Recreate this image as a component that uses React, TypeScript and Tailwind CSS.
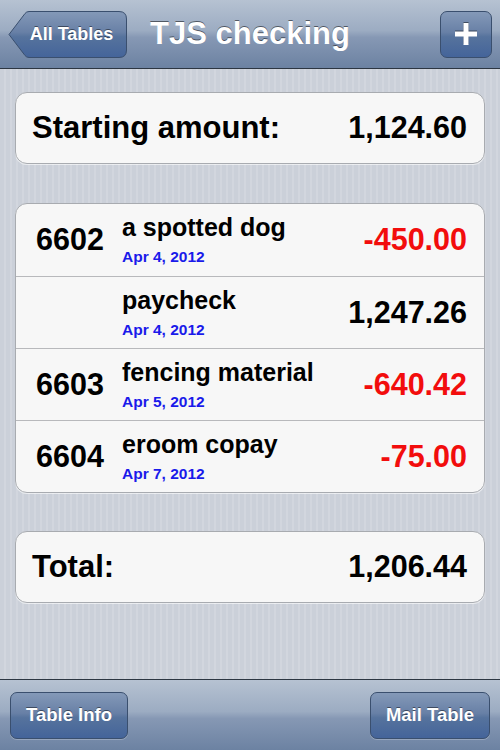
import React from "react";

const rows = [
  { num: "6602", desc: "a spotted dog", date: "Apr 4, 2012", amount: "-450.00", neg: true },
  { num: "", desc: "paycheck", date: "Apr 4, 2012", amount: "1,247.26", neg: false },
  { num: "6603", desc: "fencing material", date: "Apr 5, 2012", amount: "-640.42", neg: true },
  { num: "6604", desc: "eroom copay", date: "Apr 7, 2012", amount: "-75.00", neg: true },
];

const barBg = "bg-[linear-gradient(180deg,#b6c2d2_0%,#9cacc2_45%,#8698b4_55%,#6c82a2_100%)]";
const btnBg = "bg-[linear-gradient(180deg,#8499b8_0%,#6880a6_45%,#56739d_55%,#44649a_100%)]";

function BackButton() {
  return (
    <div className="relative h-[47px] w-[119px]">
      <svg width="119" height="47" viewBox="0 0 119 47" className="absolute inset-0">
        <defs>
          <linearGradient id="bk" x1="0" y1="0" x2="0" y2="1">
            <stop offset="0" stopColor="#8499b8" />
            <stop offset="0.45" stopColor="#6880a6" />
            <stop offset="0.55" stopColor="#56739d" />
            <stop offset="1" stopColor="#44649a" />
          </linearGradient>
        </defs>
        <path
          d="M1 23.5 L17 2.5 Q18.5 0.5 21 0.5 L111 0.5 Q118.5 0.5 118.5 8 L118.5 39 Q118.5 46.5 111 46.5 L21 46.5 Q18.5 46.5 17 44.5 Z"
          fill="url(#bk)"
          stroke="#3a4f6e"
          strokeWidth="1"
        />
      </svg>
      <span className="absolute inset-0 flex items-center justify-center pl-[8px] text-[18px] font-bold text-white [text-shadow:0_-1px_0_rgba(0,0,0,0.45)]">
        All Tables
      </span>
    </div>
  );
}

function BarButton({ children }: { children: React.ReactNode }) {
  return (
    <div
      className={`flex h-[47px] items-center justify-center rounded-[7px] border border-[#3a4f6e] ${btnBg} px-[15px] text-[18.5px] font-bold text-white shadow-[0_1px_0_rgba(255,255,255,0.25)] [text-shadow:0_-1px_0_rgba(0,0,0,0.45)]`}
    >
      {children}
    </div>
  );
}

export default function App() {
  return (
    <div className="flex h-[750px] w-[500px] flex-col overflow-hidden font-['Liberation_Sans',Arial,sans-serif] bg-[repeating-linear-gradient(90deg,#cbd0d9_0px,#cbd0d9_4px,#d2d6de_4px,#d2d6de_6px)]">
      {/* nav bar */}
      <div className={`relative flex h-[69px] shrink-0 items-center justify-between border-b border-[#2d3642] ${barBg} px-[8px]`}>
        <BackButton />
        <div className="absolute left-0 right-0 top-[16px] text-center text-[31px] font-bold leading-[36px] text-white [text-shadow:0_-1px_0_rgba(0,0,0,0.5)]">
          TJS checking
        </div>
        <div className={`flex h-[47px] w-[52px] items-center justify-center rounded-[7px] border border-[#3a4f6e] ${btnBg}`}>
          <svg width="22" height="22" viewBox="0 0 22 22" className="drop-shadow-[0_-1px_0_rgba(0,0,0,0.45)]">
            <path d="M8.5 0h5v8.5H22v5h-8.5V22h-5v-8.5H0v-5h8.5z" fill="#fff" />
          </svg>
        </div>
      </div>

      <div className="flex flex-1 flex-col px-[15px] pt-[23px]">
        <div className="flex h-[72px] items-center justify-between rounded-[12px] border border-[#a8abb0] bg-[#f7f7f7] pl-[16px] pr-[17px] text-[31px] font-bold text-black shadow-[0_1px_0_rgba(255,255,255,0.6)]">
          <span>Starting amount:</span>
          <span className="text-[30.5px]">1,124.60</span>
        </div>

        <div className="mt-[39px] flex flex-col overflow-hidden rounded-[12px] border border-[#a8abb0] bg-[#f7f7f7] shadow-[0_1px_0_rgba(255,255,255,0.6)]">
          {rows.map((r, i) => (
            <div
              key={i}
              className={`flex h-[72px] items-center pr-[17px] ${i > 0 ? "border-t border-[#b8b9bc]" : ""}`}
            >
              <div className="w-[106px] pl-[20px] text-[30.5px] font-bold text-black">{r.num}</div>
              <div className="flex flex-1 flex-col">
                <span className="text-[25px] font-bold leading-[28px] text-black">{r.desc}</span>
                <span className="mt-[6px] text-[15.5px] font-bold leading-[20px] text-[#1a1aea]">{r.date}</span>
              </div>
              <div className={`text-[30.5px] font-bold ${r.neg ? "text-[#f20d0d]" : "text-black"}`}>
                {r.amount}
              </div>
            </div>
          ))}
        </div>

        <div className="mt-[38px] flex h-[72px] items-center justify-between rounded-[12px] border border-[#a8abb0] bg-[#f7f7f7] pl-[16px] pr-[17px] text-[31px] font-bold text-black shadow-[0_1px_0_rgba(255,255,255,0.6)]">
          <span>Total:</span>
          <span className="text-[30.5px]">1,206.44</span>
        </div>
      </div>

      {/* toolbar */}
      <div className={`flex h-[71px] shrink-0 items-center justify-between border-t border-[#2d3642] ${barBg} px-[10px]`}>
        <BarButton>Table Info</BarButton>
        <BarButton>Mail Table</BarButton>
      </div>
    </div>
  );
}
